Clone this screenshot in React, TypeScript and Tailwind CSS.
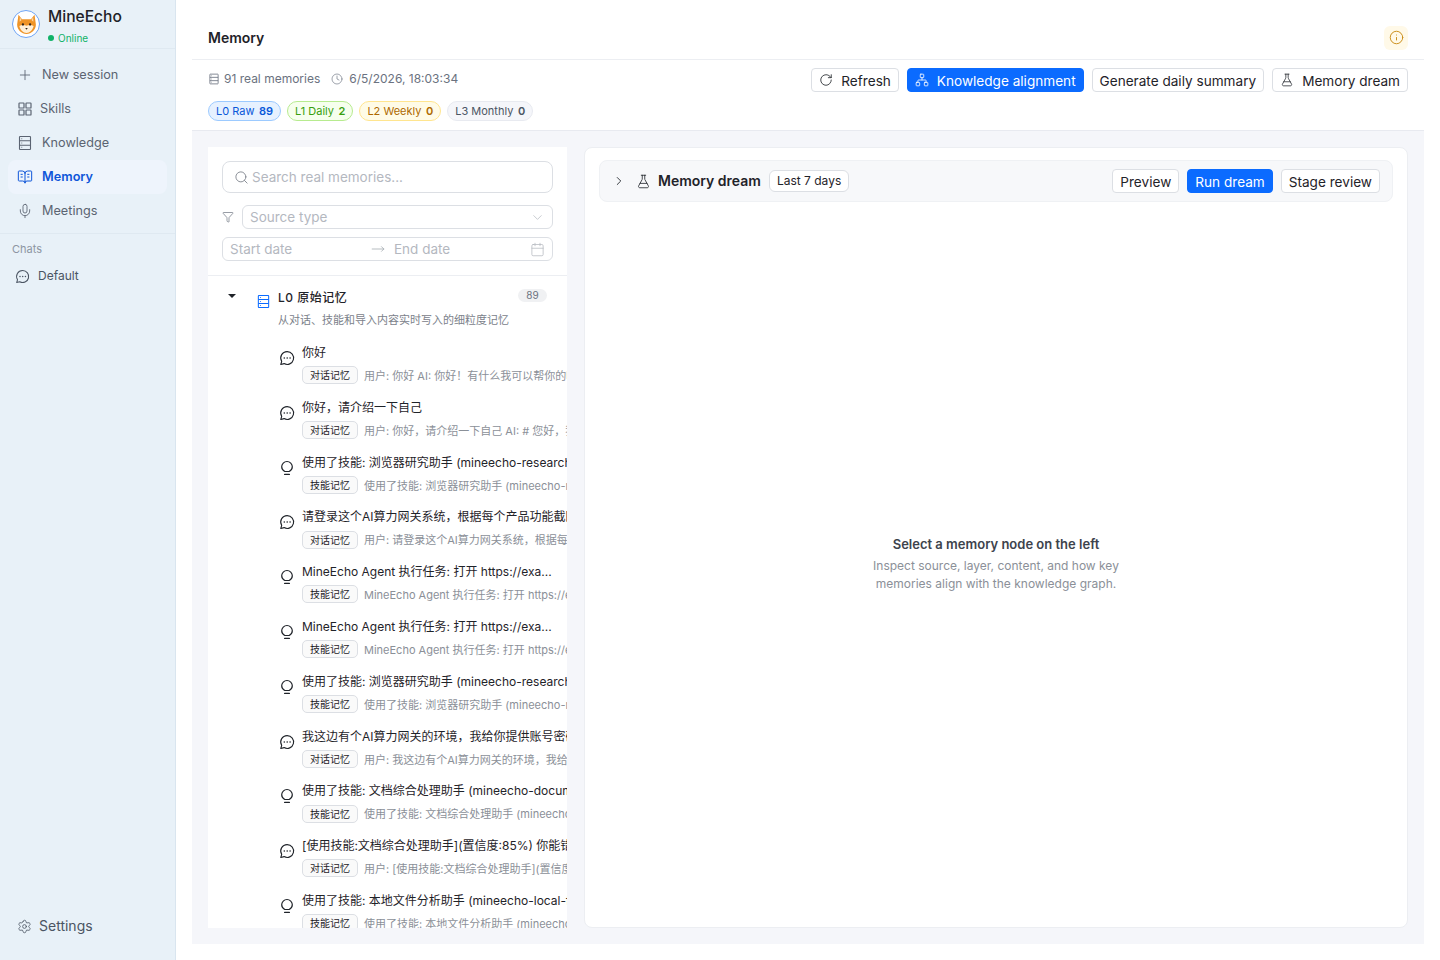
import { BookOpenText, Calendar, ChevronDown, ChevronRight, Clock, FlaskConical, Funnel, Info, Mic, MoveRight, Network, Plus, RotateCw, Search, Settings } from 'lucide-react'

const FONT = 'font-["Inter","Noto_Sans_CJK_SC",sans-serif]'

function RowsIcon({ className }: { className?: string }) {
  return (
    <svg viewBox="0 0 16 16" fill="none" stroke="currentColor" strokeWidth="1.1" className={className}>
      <rect x="2.5" y="1.5" width="11" height="13" rx="0.6" />
      <path d="M2.5 5.8h11M2.5 10.2h11" />
      <path d="M4.4 3.7h.8M4.4 8h.8M4.4 12.3h.8" />
    </svg>
  )
}

function GridIcon({ className }: { className?: string }) {
  return (
    <svg viewBox="0 0 16 16" fill="none" stroke="currentColor" strokeWidth="1.2" className={className}>
      <rect x="2" y="2" width="5" height="5" rx="0.6" />
      <rect x="9" y="2" width="5" height="5" rx="0.6" />
      <rect x="2" y="9" width="5" height="5" rx="0.6" />
      <rect x="9" y="9" width="5" height="5" rx="0.6" />
    </svg>
  )
}

function ChatIcon({ className }: { className?: string }) {
  return (
    <svg viewBox="0 0 16 16" fill="none" stroke="currentColor" strokeWidth="1.1" className={className}>
      <path d="M8.200 1.600a6.400 6.400 0 1 1-3.100 12L1.800 14.500l.9-3.100A6.400 6.400 0 0 1 8.200 1.600z" strokeLinejoin="round" />
      <circle cx="5.300" cy="8" r="0.800" fill="currentColor" stroke="none" />
      <circle cx="8.200" cy="8" r="0.800" fill="currentColor" stroke="none" />
      <circle cx="11.100" cy="8" r="0.800" fill="currentColor" stroke="none" />
    </svg>
  )
}

function BulbIcon({ className }: { className?: string }) {
  return (
    <svg viewBox="0 0 16 16" fill="none" stroke="currentColor" strokeWidth="1.2" className={className}>
      <path d="M5.800 11.500C3.800 10.500 2.700 8.700 2.700 6.800a5.300 5.300 0 0 1 10.600 0c0 1.900-1.100 3.700-3.100 4.700z" strokeLinejoin="round" />
      <path d="M5.600 14.400h4.800" strokeLinecap="round" />
    </svg>
  )
}

function FoxLogo() {
  return (
    <div className="w-[28px] h-[28px] rounded-full border border-[#6ea4f5] bg-white flex items-center justify-center">
      <svg viewBox="0 0 28 28" className="w-[25px] h-[25px]">
        <path d="M5 3l4 5h10l4-5 1.500 11c0 6-5 10.500-10.500 10.500S3.500 20 3.500 14z" fill="#ef9427" />
        <path d="M6.500 5.500l2 3.500-2.200 2zM21.500 5.500l-2 3.500 2.200 2z" fill="#fbd9ad" />
        <path d="M14 15.500c-2-1.300-5.500-1.500-8 .2 1 4.300 4.300 7.800 8 7.800s7-3.500 8-7.800c-2.500-1.700-6-1.500-8-.2z" fill="#fff0d8" />
        <circle cx="10" cy="14" r="1.300" fill="#33261c" />
        <circle cx="18" cy="14" r="1.300" fill="#33261c" />
        <path d="M12.600 18h2.800L14 19.800z" fill="#33261c" />
      </svg>
    </div>
  )
}

const navItems = [
  { label: 'New session', icon: <Plus className="w-[16px] h-[16px]" strokeWidth={1.3} />, gap: 'gap-[9px]' },
  { label: 'Skills', icon: <GridIcon className="w-[16px] h-[16px]" />, gap: 'gap-[7px]' },
  { label: 'Knowledge', icon: <RowsIcon className="w-[16px] h-[16px]" />, gap: 'gap-[9px]' },
  { label: 'Memory', icon: <BookOpenText className="w-[16px] h-[16px]" strokeWidth={1.5} />, gap: 'gap-[9px]', active: true },
  { label: 'Meetings', icon: <Mic className="w-[16px] h-[16px]" strokeWidth={1.3} />, gap: 'gap-[9px]' },
]

const levels = [
  { label: 'L0 Raw', count: 89, cls: 'bg-[#e6f1ff] border-[#9ccaff] text-[#0958d9]' },
  { label: 'L1 Daily', count: 2, cls: 'bg-[#f6ffed] border-[#b7eb8f] text-[#389e0d]' },
  { label: 'L2 Weekly', count: 0, cls: 'bg-[#fffbe6] border-[#ffe58f] text-[#ad6800]' },
  { label: 'L3 Monthly', count: 0, cls: 'bg-[#f5f6fa] border-[#e8eaf0] text-[#4b5563]' },
]

const memories = [
  { kind: 'chat', title: '你好', desc: '用户: 你好 AI: 你好！有什么我可以帮你的吗？我会尽力回答' },
  { kind: 'chat', title: '你好，请介绍一下自己', desc: '用户: 你好，请介绍一下自己 AI: # 您好，我是 MineEcho' },
  { kind: 'skill', title: '使用了技能: 浏览器研究助手 (mineecho-research-browser)', desc: '使用了技能: 浏览器研究助手 (mineecho-research-browser)' },
  { kind: 'chat', title: '请登录这个AI算力网关系统，根据每个产品功能截图说明', desc: '用户: 请登录这个AI算力网关系统，根据每个产品功能截图' },
  { kind: 'skill', title: 'MineEcho Agent 执行任务: 打开 https://exa...', desc: 'MineEcho Agent 执行任务: 打开 https://example.com/login' },
  { kind: 'skill', title: 'MineEcho Agent 执行任务: 打开 https://exa...', desc: 'MineEcho Agent 执行任务: 打开 https://example.com/login' },
  { kind: 'skill', title: '使用了技能: 浏览器研究助手 (mineecho-research-browser)', desc: '使用了技能: 浏览器研究助手 (mineecho-research-browser)' },
  { kind: 'chat', title: '我这边有个AI算力网关的环境，我给你提供账号密码登录', desc: '用户: 我这边有个AI算力网关的环境，我给你提供账号密码' },
  { kind: 'skill', title: '使用了技能: 文档综合处理助手 (mineecho-document-processor)', desc: '使用了技能: 文档综合处理助手 (mineecho-document-processor)' },
  { kind: 'chat', title: '[使用技能:文档综合处理助手](置信度:85%) 你能错误处理吗', desc: '用户: [使用技能:文档综合处理助手](置信度:85%) 你能错误' },
  { kind: 'skill', title: '使用了技能: 本地文件分析助手 (mineecho-local-file-analyzer)', desc: '使用了技能: 本地文件分析助手 (mineecho-local-file-analyzer)' },
]

function Btn({ children, primary }: { children: React.ReactNode; primary?: boolean }) {
  return (
    <button
      className={`h-[24px] px-[7px] pt-[2px] rounded-[4px] flex items-center gap-[8px] text-[13.600px] whitespace-nowrap border ${
        primary ? 'bg-[#0b6bff] border-[#0b6bff] text-white' : 'bg-white border-[#dcdfe4] text-[#1f2329]'
      }`}
    >
      {children}
    </button>
  )
}

export default function App() {
  return (
    <div className={`${FONT} flex h-[960px] w-[1440px] overflow-hidden bg-white text-[#1f2329]`}>
      <aside className="w-[176px] shrink-0 bg-[#e8f1f8] border-r border-[#d9e5ef] flex flex-col">
        <div className="h-[49px] border-b border-[#dfe9f1] flex items-start pl-[12px] pt-[7px] gap-[8px]">
          <div className="pt-[3px]"><FoxLogo /></div>
          <div>
            <div className="text-[15.600px] leading-[20px] font-medium text-[#1f2329]">MineEcho</div>
            <div className="flex items-center gap-[4px] mt-[4px] leading-[14px] text-[10px] text-[#10b268]">
              <span className="w-[6px] h-[6px] rounded-full bg-[#10b268]" />
              Online
            </div>
          </div>
        </div>
        <nav className="flex flex-col pt-[9px] px-[8px] pb-[5px] border-b border-[#dfe9f1]">
          {navItems.map(item => (
            <div
              key={item.label}
              className={`h-[34px] pl-[9px] rounded-[8px] flex items-center text-[12.700px] ${item.gap} ${
                item.active ? 'bg-[#eef4fc] text-[#0f56d9] font-semibold' : 'text-[#5b6472]'
              }`}
            >
              {item.icon}
              <span>{item.label}</span>
            </div>
          ))}
        </nav>
        <div className="px-[12px] mt-[8px] text-[11px] leading-[14px] text-[#8d96a3]">Chats</div>
        <div className="flex items-center gap-[8px] pl-[15px] mt-[10px] h-[20px] text-[12px] text-[#4b5563]">
          <ChatIcon className="w-[15px] h-[15px]" />
          Default
        </div>
        <div className="mt-auto mb-[24px] pl-[17px] flex items-center gap-[7px] text-[14px] leading-[20px] text-[#4b5563]">
          <Settings className="w-[15px] h-[15px]" strokeWidth={1.3} />
          Settings
        </div>
      </aside>

      <main className="flex-1 min-w-0 px-[16px] pb-[16px] flex flex-col">
        <header className="h-[60px] shrink-0 border-b border-[#eceef2] pl-[16px] flex items-center justify-between pt-[16px]">
          <h1 className="text-[14px] font-semibold text-[#1f2329]">Memory</h1>
          <div className="w-[24px] h-[24px] mr-[16px] rounded-[6px] bg-[#fff9e8] flex items-center justify-center">
            <Info className="w-[15px] h-[15px] text-[#c98a12]" strokeWidth={1.5} />
          </div>
        </header>

        <section className="h-[71px] shrink-0 border-b border-[#e8eaf0] px-[16px] flex justify-between">
          <div>
            <div className="flex items-center gap-[11px] text-[12px] text-[#6b7280] h-[18px] mt-[10px]">
              <span className="flex items-center gap-[4px]"><RowsIcon className="w-[12px] h-[12px]" />91 real memories</span>
              <span className="flex items-center gap-[6px]"><Clock className="w-[12px] h-[12px]" strokeWidth={1.3} />6/5/2026, 18:03:34</span>
            </div>
            <div className="flex items-center gap-[6px] mt-[13px]">
              {levels.map(l => (
                <span key={l.label} className={`h-[20px] px-[7px] rounded-full border text-[11px] flex items-center gap-[4.500px] whitespace-nowrap ${l.cls}`}>
                  {l.label} <b className="font-semibold">{l.count}</b>
                </span>
              ))}
            </div>
          </div>
          <div className="flex items-start gap-[8px] pt-[8px]">
            <Btn><RotateCw className="w-[14px] h-[14px] -mt-[2px]" strokeWidth={1.4} />Refresh</Btn>
            <Btn primary><Network className="w-[14px] h-[14px] -mt-[2px]" strokeWidth={1.4} />Knowledge alignment</Btn>
            <Btn>Generate daily summary</Btn>
            <Btn><FlaskConical className="w-[14px] h-[14px] -mt-[2px]" strokeWidth={1.3} />Memory dream</Btn>
          </div>
        </section>

        <div className="flex-1 min-h-0 bg-[#f5f6fa] p-[16px] flex gap-[17px]">
          <div className="w-[359px] shrink-0 bg-white flex flex-col overflow-hidden">
            <div className="shrink-0 border-b border-[#eceef2] p-[14px] flex flex-col">
              <div className="h-[32px] rounded-[8px] border border-[#dcdfe4] pl-[11px] flex items-center gap-[3px] text-[13.500px] text-[#b4b8bf]">
                <Search className="w-[15px] h-[15px] text-[#7b818a]" strokeWidth={1.4} />
                Search real memories...
              </div>
              <div className="flex items-center gap-[8px] mt-[12px]">
                <Funnel className="w-[12px] h-[12px] text-[#6b7280]" strokeWidth={1.4} />
                <div className="flex-1 h-[24px] rounded-[6px] border border-[#dcdfe4] px-[7px] flex items-center justify-between text-[13.500px] text-[#b4b8bf]">
                  Source type
                  <ChevronDown className="w-[15px] h-[15px] text-[#bcc0c6]" strokeWidth={1.3} />
                </div>
              </div>
              <div className="h-[24px] rounded-[6px] border border-[#dcdfe4] mt-[8px] px-[7px] flex items-center text-[13.500px] text-[#b4b8bf]">
                <span className="w-[141px]">Start date</span>
                <MoveRight className="w-[14px] h-[14px] text-[#9aa0a8]" strokeWidth={1.2} />
                <span className="ml-[9px] flex-1">End date</span>
                <Calendar className="w-[15px] h-[15px]" strokeWidth={1.2} />
              </div>
            </div>

            <div className="flex-1 min-h-0 overflow-hidden">
              <div className="flex pt-[13px] pl-[20px] pr-[20px]">
                <span className="w-0 h-0 mt-[5px] border-x-[4px] border-x-transparent border-t-[4px] border-t-[#1f2329]" />
                <RowsIcon className="w-[15px] h-[15px] text-[#0b6bff] ml-[20px] mt-[5px]" />
                <div className="ml-[7px] flex-1 min-w-0">
                  <div className="flex items-start justify-between">
                    <span className="text-[12px] leading-[18px] tracking-[0.5px] font-medium">L0 原始记忆</span>
                    <span className="h-[13px] w-[29px] rounded-full bg-[#f0f1f3] text-[#6b7280] text-[10px] leading-[13px] text-center">89</span>
                  </div>
                  <div className="text-[11px] leading-[16px] mt-[5px] text-[#7b818a]">从对话、技能和导入内容实时写入的细粒度记忆</div>
                </div>
              </div>
              <div className="mt-[15px]">
                {memories.map((m, i) => (
                  <div key={i} className="h-[54.800px] pl-[71px] flex gap-[7px] overflow-hidden">
                    {m.kind === 'chat' ? (
                      <ChatIcon className="w-[16px] h-[16px] mt-[7px] shrink-0 text-[#1f2329]" />
                    ) : (
                      <BulbIcon className="w-[16px] h-[16px] mt-[7px] shrink-0 text-[#1f2329]" />
                    )}
                    <div className="min-w-0 flex-1 pt-[1px]">
                      <div className="text-[12px] leading-[18px] whitespace-nowrap text-[#1f2329]">{m.title}</div>
                      <div className="flex items-center mt-[4px] gap-[6px]">
                        <span className="shrink-0 h-[18px] w-[56px] rounded-[5px] border border-[#dcdfe4] bg-[#fafafa] text-[10px] leading-[16px] text-center text-[#1f2329]">
                          {m.kind === 'chat' ? '对话记忆' : '技能记忆'}
                        </span>
                        <span className="pt-[2px] text-[11px] whitespace-nowrap text-[#8b9098]">{m.desc}</span>
                      </div>
                    </div>
                  </div>
                ))}
              </div>
            </div>
          </div>

          <div className="flex-1 min-w-0 bg-white border border-[#eceef2] rounded-[8px] p-[12px] px-[14px] flex flex-col">
            <div className="h-[42px] shrink-0 rounded-[8px] bg-[#f7f8fa] border border-[#eff1f4] pl-[12px] pr-[12px] flex items-center">
              <ChevronRight className="w-[14px] h-[14px] text-[#1f2329]" strokeWidth={1.5} />
              <FlaskConical className="w-[15px] h-[15px] ml-[10px] text-[#1f2329]" strokeWidth={1.3} />
              <span className="ml-[7px] pb-[1px] text-[14px] font-semibold text-[#1f2329]">Memory dream</span>
              <span className="ml-[8px] h-[22px] px-[7px] rounded-[6px] border border-[#dcdfe4] bg-white text-[12px] leading-[20px]">Last 7 days</span>
              <div className="ml-auto flex items-center gap-[8px]">
                <Btn>Preview</Btn>
                <Btn primary>Run dream</Btn>
                <Btn>Stage review</Btn>
              </div>
            </div>
            <div className="flex-1 pt-[10px] flex flex-col items-center justify-center text-center">
              <div className="text-[13px] leading-[18px] font-semibold text-[#3d434c]">Select a memory node on the left</div>
              <div className="mt-[4px] w-[260px] text-[12px] leading-[18px] text-[#8b9098]">
                Inspect source, layer, content, and how key memories align with the knowledge graph.
              </div>
            </div>
          </div>
        </div>
      </main>
    </div>
  )
}
